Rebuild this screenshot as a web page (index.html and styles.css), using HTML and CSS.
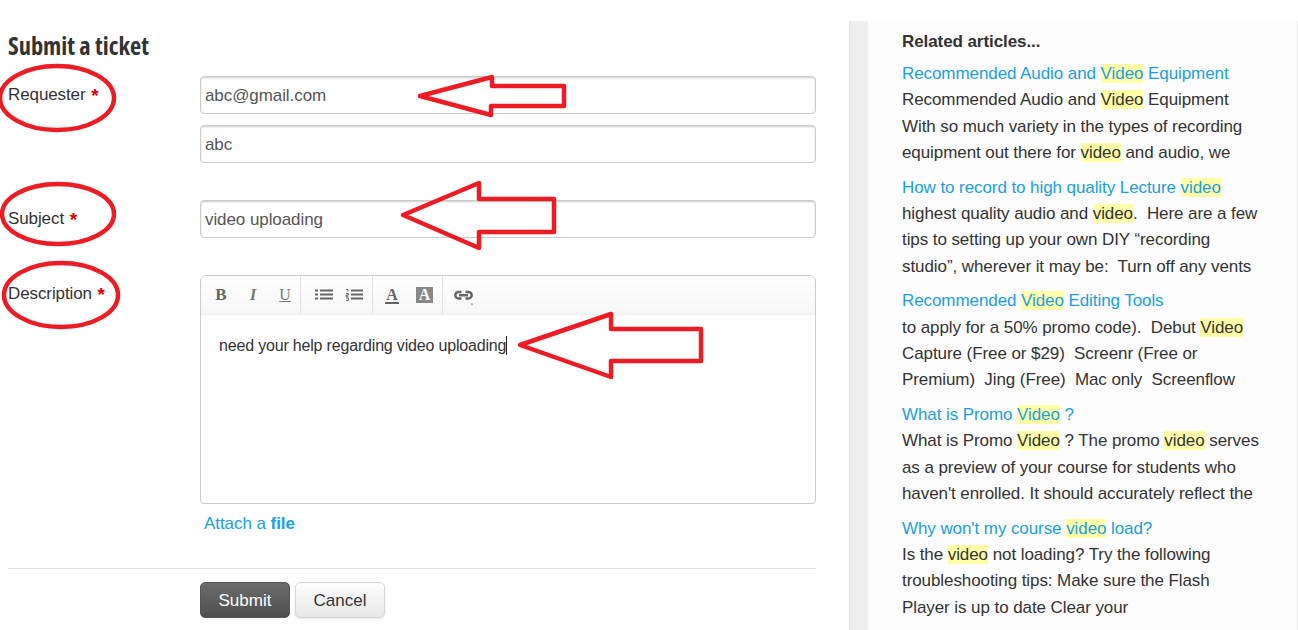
FILE: index.html
```html
<!DOCTYPE html>
<html lang="en">
<head>
<meta charset="utf-8">
<title>Submit a ticket</title>
<link rel="stylesheet" href="styles.css">
</head>
<body>
<div class="page">
  <main class="main">
    <h1 class="title">Submit a ticket</h1>
    <form class="form">
      <div class="row row-requester">
        <label class="label">Requester <span class="req">*</span></label>
        <div class="fields">
          <div class="input">abc@gmail.com</div>
          <div class="input">abc</div>
        </div>
      </div>
      <div class="row row-subject">
        <label class="label">Subject <span class="req">*</span></label>
        <div class="fields"><div class="input">video uploading</div></div>
      </div>
      <div class="row row-desc">
        <label class="label">Description <span class="req">*</span></label>
        <div class="fields">
          <div class="editor">
            <div class="toolbar">
              <div class="tgroup g1">
                <span class="tb tb-b">B</span>
                <span class="tb tb-i">I</span>
                <span class="tb tb-u">U</span>
              </div>
              <div class="tgroup g2">
                <svg class="ico" width="18" height="12" viewBox="0 0 18 12"><path d="M0 1.500h3M5 1.500h13M0 5.500h3M5 5.500h13M0 9.500h3M5 9.500h13" stroke="#666" stroke-width="2.200"/></svg>
                <svg class="ico" width="18" height="12" viewBox="0 0 18 12"><path d="M1 .5h2v2M1 4.500h2.400v1.600H1v1.600h2.400M1 9h2.400v2.400H1" stroke="#666" stroke-width="1" fill="none"/><path d="M6 1.500h12M6 5.500h12M6 9.500h12" stroke="#666" stroke-width="2.200"/></svg>
              </div>
              <div class="tgroup g3">
                <span class="tb tb-a">A</span>
                <span class="tb tb-abg">A</span>
              </div>
              <div class="tgroup g4">
                <svg class="ico" width="20" height="18" viewBox="0 0 20 18"><path d="M7.500 4H4.500a3.200 3.200 0 0 0 0 6.400H7.500M11.500 4h3a3.200 3.200 0 0 1 0 6.400h-3M5 7.200h9" stroke="#666" stroke-width="2.500" fill="none"/><path d="M16.500 15.500h3l-1.500 2z" fill="#999"/></svg>
              </div>
            </div>
            <div class="content">need your help regarding video uploading<span class="caret"></span></div>
          </div>
          <a class="attach">Attach a <b>file</b></a>
        </div>
      </div>
      <div class="actions">
        <button type="button" class="btn btn-primary">Submit</button>
        <button type="button" class="btn btn-default">Cancel</button>
      </div>
    </form>
  </main>
  <aside class="side">
    <div class="side-inner">
      <h2 class="side-title">Related articles...</h2>
      <div class="article">
        <a class="art-link">Recommended Audio and <mark>Video</mark> Equipment</a>
        <p class="art-text">Recommended Audio and <mark>Video</mark> Equipment<br>With so much variety in the types of recording<br>equipment out there for <mark>video</mark> and audio, we</p>
      </div>
      <div class="article">
        <a class="art-link">How to record to high quality Lecture <mark>video</mark></a>
        <p class="art-text">highest quality audio and <mark>video</mark>.&nbsp; Here are a few<br>tips to setting up your own DIY “recording<br>studio”, wherever it may be:&nbsp; Turn off any vents</p>
      </div>
      <div class="article">
        <a class="art-link">Recommended <mark>Video</mark> Editing Tools</a>
        <p class="art-text">to apply for a 50% promo code).&nbsp; Debut <mark>Video</mark><br>Capture (Free or $29)&nbsp; Screenr (Free or<br>Premium)&nbsp; Jing (Free)&nbsp; Mac only&nbsp; Screenflow</p>
      </div>
      <div class="article">
        <a class="art-link">What is Promo <mark>Video</mark> ?</a>
        <p class="art-text">What is Promo <mark>Video</mark> ? The promo <mark>video</mark> serves<br>as a preview of your course for students who<br>haven't enrolled. It should accurately reflect the</p>
      </div>
      <div class="article">
        <a class="art-link">Why won't my course <mark>video</mark> load?</a>
        <p class="art-text">Is the <mark>video</mark> not loading? Try the following<br>troubleshooting tips: Make sure the Flash<br>Player is up to date Clear your</p>
      </div>
    </div>
  </aside>
  <svg class="marks" width="1298" height="630" viewBox="0 0 1298 630">
    <g class="mark-shape">
      <ellipse cx="57" cy="98" rx="57" ry="32"/>
      <ellipse cx="58" cy="214" rx="56" ry="30"/>
      <ellipse cx="61" cy="295" rx="57" ry="32"/>
      <path d="M420 96L492 77V86H564V106H491V115Z"/>
      <path d="M403 215L479 183V199H554V232H479V248Z"/>
      <path d="M520 345L611 314V329H701V361H611V377Z"/>
    </g>
  </svg>
</div>
</body>
</html>
```
FILE: styles.css
```css
* { box-sizing: border-box; }
html, body { margin: 0; padding: 0; background: #fff; }
body {
  font-family: "Liberation Sans", Arial, sans-serif;
  font-size: 17px;
  color: #333;
  overflow: hidden;
}
.page {
  position: relative;
  display: flex;
  align-items: flex-start;
  width: 1298px;
  height: 630px;
  overflow: hidden;
}
.main {
  width: 816px;
  flex: none;
  padding: 30px 0 0 8px;
}
.title {
  margin: 0;
  height: 32px;
  font-family: "Open Sans", sans-serif;
  font-stretch: condensed;
  font-size: 24.4px;
  line-height: 32px;
  font-weight: 700;
  color: #333;
}
.form { margin-top: 14px; }
.row {
  display: grid;
  grid-template-columns: 192px 616px;
}
.row-subject { margin-top: 37px; }
.row-desc { margin-top: 37px; }
.label {
  font-size: 17px;
  line-height: 20px;
  letter-spacing: -.1px;
  padding-top: 9px;
  color: #333;
}
.req { color: #d00; font-weight: 700; font-size: 19px; line-height: 18px; vertical-align: -2px; margin-left: 1px; }
.fields { display: flex; flex-direction: column; gap: 11px; }
.input {
  height: 38px;
  border: 1px solid #ccc;
  border-radius: 4px;
  padding: 0 4px;
  font-size: 17px;
  line-height: 38px;
  letter-spacing: -.08px;
  color: #555;
  background: #fff;
  box-shadow: inset 0 1px 2px rgba(0, 0, 0, .2);
}
.editor {
  height: 229px;
  border: 1px solid #ccc;
  border-radius: 6px 6px 4px 4px;
  overflow: hidden;
  background: #fff;
}
.toolbar {
  display: flex;
  height: 39px;
  border-bottom: 1px solid #eee;
  background: linear-gradient(#fff, #f6f6f6);
}
.tgroup {
  display: flex;
  align-items: center;
  border-right: 1px solid #e3e3e3;
}
.g1 { width: 100px; padding-left: 13px; gap: 18px; }
.g2 { width: 72px; padding-left: 14px; gap: 12px; }
.g3 { width: 70px; padding-left: 12px; gap: 17px; }
.g4 { width: 0; border-right: 0; padding-left: 11px; overflow: visible; }
.ico { flex: none; display: block; }
.g4 .ico { margin-top: 4px; }
.tb {
  display: block;
  width: 14px;
  font-family: "Liberation Serif", serif;
  font-size: 17px;
  line-height: 18px;
  text-align: center;
  color: #666;
}
.tb-b { font-weight: 700; }
.tb-i { font-style: italic; font-weight: 700; color: #777; }
.tb-u { text-decoration: underline; color: #777; font-size: 16px; }
.tb-a { font-weight: 700; border-bottom: 2px solid #666; line-height: 15px; font-size: 16px; }
.tb-abg { width: 17px; height: 16px; background: #888; color: #fff; font-weight: 700; font-size: 16px; line-height: 16px; }
.content {
  padding: 21px 18px;
  font-size: 16px;
  line-height: 20px;
  letter-spacing: -.18px;
  color: #333;
}
.caret {
  display: inline-block;
  width: 1px;
  height: 19px;
  background: #222;
  vertical-align: -4px;
}
.attach {
  margin: -1px 0 0 4px;
  font-size: 17px;
  line-height: 20px;
  letter-spacing: -.06px;
  color: #1a9fe0;
}
.attach b { font-weight: 700; }
.actions {
  margin-top: 34px;
  padding: 13px 0 0 192px;
  border-top: 1px solid #e2e2e2;
  display: flex;
  gap: 5px;
}
.btn {
  width: 90px;
  height: 36px;
  border-radius: 5px;
  font-family: "Liberation Sans", Arial, sans-serif;
  font-size: 17px;
  padding: 1px 0 0;
}
.btn-primary {
  border: 1px solid #555;
  color: #fff;
  background: linear-gradient(#6b6b6b, #4f4f4f);
}
.btn-default {
  border: 1px solid #d6d6d6;
  color: #333;
  background: linear-gradient(#fff, #e6e6e6);
  box-shadow: 0 1px 2px rgba(0, 0, 0, .1);
}
.side {
  flex: none;
  width: 448px;
  height: 609px;
  margin: 21px 0 0 34px;
  background: #fdfdfd;
  border-left: 18px solid #eee;
  border-right: 1px solid #e8e8e8;
  box-shadow: -1px 0 0 #e0e0e0;
}
.side-inner { padding: 11px 0 0 34px; letter-spacing: -.08px; }
.side-title {
  margin: 0 0 9px;
  font-size: 17px;
  line-height: 20px;
  font-weight: 700;
  color: #333;
}
.article { margin-bottom: 8.3px; }
.art-link, .art-text {
  display: block;
  margin: 0;
  font-size: 17px;
  line-height: 26.35px;
}
.art-link { color: #1a9fe0; }
.art-text { color: #333; }
mark { background: #ffffa8; color: inherit; }
.marks {
  position: absolute;
  left: 0;
  top: 0;
  pointer-events: none;
}
.mark-shape {
  fill: none;
  stroke: #ed1c24;
  stroke-width: 4.5;
  stroke-linejoin: round;
}
```
